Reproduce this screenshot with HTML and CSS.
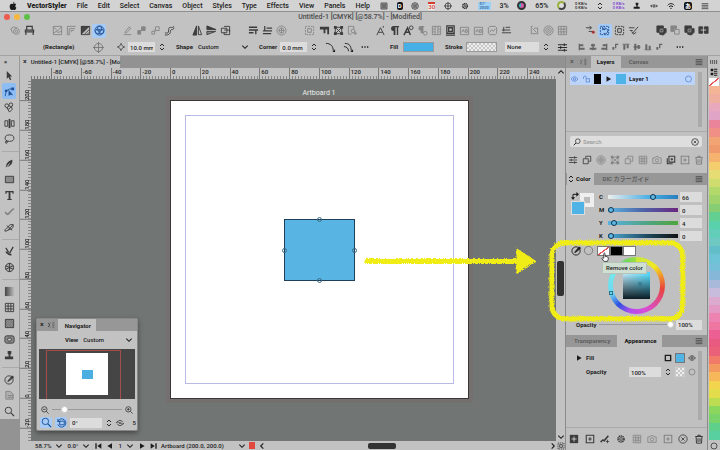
FILE: index.html
```html
<!DOCTYPE html>
<html lang="en">
<head>
  <meta charset="UTF-8">
  <meta name="viewport" content="width=device-width, initial-scale=1.0">
  <title>VectorStyler</title>
  <link rel="stylesheet" href="styles.css">
</head>
<body>
  <svg class="sprite" aria-hidden="true">
    <defs>
      <pattern id="dots" width="2" height="2" patternUnits="userSpaceOnUse"><path d="M0 0h1v1H0zM1 1h1v1H1z" fill="#444" stroke="none"/></pattern>
      <linearGradient id="fade"><stop offset="0" stop-color="#444"/><stop offset="1" stop-color="#bbb"/></linearGradient>
    </defs>
    <symbol id="gear" viewBox="0 0 12 12"><circle cx="6" cy="6" r="3.6" stroke-dasharray="1.6 .7" stroke-width="2"/><circle cx="6" cy="6" r="1.6"/></symbol>
    <symbol id="gearbox" viewBox="0 0 12 12"><path d="M1 4l3-2 3 1 1-1M1 4l1 3 2 2"/><circle cx="7" cy="7" r="3.2"/><circle cx="7" cy="7" r="1.2"/></symbol>
    <symbol id="printer" viewBox="0 0 12 12"><path d="M3 5V1.500h6V5M1.500 5.500h9v2h-9zM2 8v3M10 8v3" stroke-width="1.300"/></symbol>
    <symbol id="curvebox" viewBox="0 0 12 12"><path d="M1.500 1.500h9v9h-9zM1.500 2l4 4h1l4-4M1.500 9l3-2 2 1 4-1"/></symbol>
    <symbol id="steps" viewBox="0 0 12 12"><path d="M1.500 10.500v-9h9M3.500 10v-6h6.500M5.500 8V6h3M1.500 10.500h3"/></symbol>
    <symbol id="hatch" viewBox="0 0 12 12"><path d="M1 1h10L1 11z" fill="#444" stroke="none"/><path d="M1.500 1.500h9v9h-9zM5 10l5-5M8 10l2-2"/></symbol>
    <symbol id="trefoil" viewBox="0 0 12 12"><circle cx="6" cy="4.200" r="2.600"/><circle cx="4.300" cy="7" r="2.600"/><circle cx="7.700" cy="7" r="2.600"/><circle cx="6" cy="6" r="5"/></symbol>
    <symbol id="pencil" viewBox="0 0 12 12"><path d="M2 10.500h8M3 8l5-6 1.500 1.500-5 5.500z"/></symbol>
    <symbol id="link" viewBox="0 0 12 12"><path d="M6 2h4v4H6zM2 6h3v4H2z" fill="currentColor"/><path d="M4 8l4-4"/></symbol>
    <symbol id="linkopen" viewBox="0 0 12 12"><path d="M6 2h4v4H6zM2 7h3v3H2z"/><path d="M4 5l2 2"/></symbol>
    <symbol id="snake" viewBox="0 0 12 12"><path d="M1 8.500c3 1 4 0 4-2s0-4 2-4 2 1 4-1M1 11c5 0 6-2 6-4s1-2 2-2 1 0 2-2"/></symbol>
    <symbol id="fliph" viewBox="0 0 12 12"><path d="M5 1v10H1z" fill="currentColor"/><path d="M7 1v9.500h3.500z"/></symbol>
    <symbol id="flipv" viewBox="0 0 12 12"><path d="M1 5V1l10 4z" fill="currentColor"/><path d="M1 7h9.500L1 10.500z" fill="#888"/></symbol>
    <symbol id="copy" viewBox="0 0 12 12"><path d="M1.500 3.500h6v5h-6zM4.500 1.500h6v6M4.500 8v2.500h6v-5h-6"/></symbol>
    <symbol id="swap" viewBox="0 0 12 12"><path d="M3 9V3.500h6" stroke-width="1.500"/><path d="M0 8h6l-3 4zM8 0v7l4-3.500z" fill="currentColor" stroke="none"/></symbol>
    <symbol id="up" viewBox="0 0 12 12"><path d="M1 2.500h9M1 5.500h10M1 8.500h5M8.500 10V6" stroke-width="1.500"/></symbol>
    <symbol id="down" viewBox="0 0 12 12"><path d="M5 3.500h6M1 6.500h10M1 9.500h9M3 1v5" stroke-width="1.300"/></symbol>
    <symbol id="rings" viewBox="0 0 12 12"><circle cx="6" cy="6" r="5"/><circle cx="6" cy="6" r="2.800"/><path d="M3 6h6M6 3v6"/></symbol>
    <symbol id="marquee" viewBox="0 0 12 12"><path d="M1.500 1.500h9v9h-9z" stroke-dasharray="2 1"/><path d="M4 4h4v4H4z"/></symbol>
    <symbol id="quote" viewBox="0 0 12 12"><path d="M1 2h10v3H1zM5 5h2v4H5zM9 5h2v5H9z" fill="currentColor" stroke="none"/></symbol>
    <symbol id="bounds" viewBox="0 0 12 12"><path d="M2.500 2.500h7v7h-7z"/><path d="M1 1h3v3H1zM8 1h3v3H8zM1 8h3v3H1zM8 8h3v3H8z" fill="currentColor" stroke="none"/><path d="M3 3l6 6M9 3L3 9"/></symbol>
    <symbol id="pageadd" viewBox="0 0 12 12"><path d="M1.500 10V1.500h6v3M1.500 10H5"/><circle cx="6.500" cy="6.500" r="2"/><path d="M9 7v4M7 9h4"/></symbol>
    <symbol id="fontA" viewBox="0 0 12 12"><path d="M2 11L6 3l4 8M3.500 8h5M9 1v2"/></symbol>
    <symbol id="para" viewBox="0 0 12 12"><path d="M5 6.500a2.700 2.700 0 0 1 0-5.500h6v1.500H10V11H8.500V2.500H7V11H5z" fill="currentColor" stroke="none"/></symbol>
    <symbol id="paradim" viewBox="0 0 12 12"><path d="M4 6a2.500 2.500 0 0 1 0-5h4v1H7v7H4z" fill="currentColor" stroke="none"/><circle cx="9" cy="9" r="2"/></symbol>
    <symbol id="fontAo" viewBox="0 0 12 12"><path d="M1 11l4-8 3 8M2.500 8h5" stroke-width="1.600"/><circle cx="9" cy="3" r="2"/></symbol>
    <symbol id="columns" viewBox="0 0 12 12"><path d="M1.500 1.500h9v9h-9zM4.500 2v8M7.500 2v8M2 4.500h2M8 4.500h2M2 7.500h2M8 7.500h2"/></symbol>
    <symbol id="frame" viewBox="0 0 12 12"><path d="M1 11h10M2 1h8v8H2zM4 3h4v4H4z" stroke-width="1.400"/></symbol>
    <symbol id="card" viewBox="0 0 12 12"><path d="M1.500 2.500h9v8h-9zM3 8l1.500-3L6 8M7 5h2v3H7z"/></symbol>
    <symbol id="ring" viewBox="0 0 12 12"><path d="M1.500 3L3 1.500h6L10.500 3v6L9 10.500H3L1.500 9z"/><path d="M3 8l2-3 2 2 2-3"/></symbol>
    <symbol id="wrap" viewBox="0 0 12 12"><path d="M5 2.500h5M1 5.500h9M1 8.500h10M3 2v5"/></symbol>
    <symbol id="corner" viewBox="0 0 12 12"><path d="M2 1.500h2M2.500 2v7M2 9.500h8M9.500 3v6M5.500 3.500h4M4 4l4 4"/></symbol>
    <symbol id="target" viewBox="0 0 12 12"><circle cx="6" cy="6" r="5"/><circle cx="6" cy="6" r="3"/><circle cx="6" cy="6" r="1"/></symbol>
    <symbol id="gridbox" viewBox="0 0 12 12"><path d="M1.500 1.500h9v9h-9zM4.500 2v8M7.500 2v8M2 4.500h8M2 7.500h8"/></symbol>
    <symbol id="nodered" viewBox="0 0 12 12"><path d="M1 3h6M5 1l2 2-2 2M4 7h4"/><circle cx="9" cy="8" r="1.600" fill="#a33" stroke="none"/></symbol>
    <symbol id="snap" viewBox="0 0 12 12"><path d="M1.500 1.500h9v9h-9z" stroke-dasharray="2 1"/><path d="M4 5a3 3 0 1 1 1 4M4 2v3h3"/></symbol>
    <symbol id="brush" viewBox="0 0 12 12"><path d="M1 3h6M2 6h3M5 9l6-7M4 7l2 3 3-2"/></symbol>
    <symbol id="unite" viewBox="0 0 12 12"><path d="M1 1h7v3h3v4l-3 3-4-1V8H1z" fill="currentColor"/><path d="M4.500 4.500h3v3h-3z" stroke="#999"/></symbol>
    <symbol id="minus" viewBox="0 0 12 12"><path d="M1 1h6v3H4v3H1z" fill="currentColor"/><path d="M5 5h5v5H5z"/></symbol>
    <symbol id="divide" viewBox="0 0 12 12"><path d="M1 2h4v7H1zM7 2h4v7H7z" fill="currentColor"/><path d="M3 5.500h6" stroke="#ccc"/></symbol>
    <symbol id="crosshair" viewBox="0 0 12 12"><circle cx="6" cy="6" r="4.500"/><path d="M6 0v12M0 6h12"/></symbol>
    <symbol id="move" viewBox="0 0 12 12"><path d="M1 6h10M6 3v6M3 4L1 6l2 2M9 4l2 2-2 2"/></symbol>
    <symbol id="diamond" viewBox="0 0 12 12"><path d="M6 2l4 4-4 4-4-4z"/><path d="M6 0v3M6 9v3M0 6h3M9 6h3"/></symbol>
    <symbol id="arc" viewBox="0 0 12 12"><path d="M1 1.500c5 0 8 3 8 8"/><path d="M11 8v3H8z" fill="currentColor" stroke="none"/></symbol>
    <symbol id="arcs" viewBox="0 0 12 12"><path d="M2 1.500c5 0 7 3 7 8M1 5c3 0 5 2 5 5"/><path d="M11 8v3H8z" fill="currentColor" stroke="none"/></symbol>
    <symbol id="dots3" viewBox="0 0 12 12"><path d="M1 5h2v2H1zM5 5h2v2H5zM9 5h2v2H9z" fill="currentColor" stroke="none"/></symbol>
    <symbol id="sliders" viewBox="0 0 12 12"><path d="M1 3h10M1 6h10M1 9h10M8 1.500v3M4 4.500v3M8 7.500v3"/></symbol>
    <symbol id="alignl" viewBox="0 0 12 12"><path d="M1 1h2v10H1zM3 2h5v3H3zM3 7h7v3H3z" fill="currentColor" stroke="none"/></symbol>
    <symbol id="alignc" viewBox="0 0 12 12"><path d="M5 1h2v10H5zM3 2h6v3H3zM1 7h10v3H1z" fill="currentColor" stroke="none"/></symbol>
    <symbol id="alignr" viewBox="0 0 12 12"><path d="M9 1h2v10H9zM4 2h5v3H4zM2 7h7v3H2z" fill="currentColor" stroke="none"/></symbol>
    <symbol id="aligns" viewBox="0 0 12 12"><path d="M6 1h5v2H8v5H6zM2 6h3v4H2z" fill="currentColor" stroke="none"/></symbol>
    <symbol id="alignt" viewBox="0 0 12 12"><path d="M1 1h10v1.500H1zM2 3h3v7H2zM7 3h3v5H7z" fill="currentColor" stroke="none"/></symbol>
    <symbol id="alignm" viewBox="0 0 12 12"><path d="M1 5h10v2H1zM2 1h3v10H2zM7 3h3v6H7z" fill="currentColor" stroke="none"/></symbol>
    <symbol id="alignb" viewBox="0 0 12 12"><path d="M1 9.500h10V11H1zM2 2h3v7H2zM7 4h3v5H7z" fill="currentColor" stroke="none"/></symbol>
    <symbol id="arrow" viewBox="0 0 12 12"><path d="M3 1l6 6H6.500L8 10.500l-1.500.5L5 8 3 9.500z" fill="currentColor" stroke="none"/></symbol>
    <symbol id="node" viewBox="0 0 12 12"><path d="M1.500 11c0-5 2-8 8-8"/><path d="M5 4l5 6-3-.5L5 11zM8 1.500h3v3H8zM1 4h2.500v2.500H1z" fill="currentColor" stroke="none"/></symbol>
    <symbol id="select" viewBox="0 0 12 12"><circle cx="3" cy="4" r="2"/><circle cx="7.500" cy="3" r="2"/><path d="M3 6l2 2 3-3 1 3-3 3z"/></symbol>
    <symbol id="mirror" viewBox="0 0 12 12"><path d="M1 3h3v6H1zM8 3h3v6H8z"/><path d="M5 1h2v10H5z" fill="currentColor" stroke="none"/></symbol>
    <symbol id="lasso" viewBox="0 0 12 12"><ellipse cx="6" cy="4.500" rx="4.800" ry="3.500"/><path d="M3 7c-2 1 0 3 1 2s-1-2-2-1 0 2 1 3"/></symbol>
    <symbol id="pen" viewBox="0 0 12 12"><path d="M2 11c0-5 3-8 7-9 1 4-2 7-6 8z" fill="currentColor" stroke="none"/><path d="M2 11l4-5" stroke="#ccc"/></symbol>
    <symbol id="shape" viewBox="0 0 12 12"><path d="M1.500 2.500h9v7h-9z" fill="#8b8b8b"/></symbol>
    <symbol id="type" viewBox="0 0 12 12"><path d="M1.500 1h9v3H9.300L9 2.500H7v7l1.500.5v1h-5v-1L5 9.500v-7H3L2.700 4H1.500z" fill="currentColor" stroke="none"/></symbol>
    <symbol id="stroke" viewBox="0 0 12 12"><path d="M1 7c1 0 2 2 3 2s4-5 7-6" stroke-width="2"/></symbol>
    <symbol id="blob" viewBox="0 0 12 12"><path d="M1 10c0-4 4-3 4-5s4-3 5-2-1 5-3 5-3 2-6 2zM3 4l6 5M4 9l6-6"/></symbol>
    <symbol id="knife" viewBox="0 0 12 12"><path d="M2 2l3 5M10 1L6 8" stroke-width="1.400"/><path d="M2 7c2-1 3 4 6 2" stroke-width="1.800"/></symbol>
    <symbol id="mesh" viewBox="0 0 12 12"><circle cx="6" cy="6" r="4.500" fill="#aaa"/><path d="M2 4l8 4M2 8l8-4M6 1v10"/></symbol>
    <symbol id="gradient" viewBox="0 0 12 12"><path d="M1 1h10v10H1z" fill="url(#fade)" stroke="none"/></symbol>
    <symbol id="pattern" viewBox="0 0 12 12"><path d="M1.500 1.500h9v9h-9z" fill="url(#dots)"/></symbol>
    <symbol id="contour" viewBox="0 0 12 12"><rect x="1" y="2" width="10" height="8" rx="2" fill="#888"/><rect x="4" y="4.500" width="4" height="3" rx="1" fill="#ccc"/></symbol>
    <symbol id="person" viewBox="0 0 12 12"><path d="M4 1h4v3L7 5v2h3v3H1V7h4V5L4 4z" fill="currentColor" stroke="none"/></symbol>
    <symbol id="dropper" viewBox="0 0 12 12"><circle cx="5.500" cy="6.500" r="4.500"/><path d="M4 8l5-6 1.500 1.500L5 8z" fill="currentColor"/></symbol>
    <symbol id="artboard" viewBox="0 0 12 12"><path d="M2 1.500h5l3 3V10H2z" fill="#999"/><path d="M4 6h6M4 8h6"/></symbol>
    <symbol id="zoom" viewBox="0 0 12 12"><circle cx="4.800" cy="4.800" r="3.500"/><path d="M7.500 7.500L11 11" stroke-width="1.400"/></symbol>
    <symbol id="zoomin" viewBox="0 0 12 12"><circle cx="5" cy="5" r="4"/><path d="M8 8l3.500 3.500M3 5h4M5 3v4"/></symbol>
    <symbol id="zoomout" viewBox="0 0 12 12"><circle cx="5" cy="5" r="4"/><path d="M8 8l3.500 3.500M3 5h4"/></symbol>
    <symbol id="rotate" viewBox="0 0 12 12"><path d="M2 2v3h3M2 5a4.500 4.500 0 1 1 0 3"/><path d="M4 4.500h5v4H4z"/></symbol>
    <symbol id="sync" viewBox="0 0 12 12"><path d="M2 5a4.200 4.200 0 0 1 8 0M10 7a4.200 4.200 0 0 1-8 0M0 6l2-2 2 2M8 6l2 2 2-2"/><circle cx="6" cy="6" r="1"/></symbol>
    <symbol id="eye" viewBox="0 0 12 12"><path d="M1 6c3-4.500 7-4.500 10 0-3 4.500-7 4.500-10 0z"/><circle cx="6" cy="6" r="1.700"/></symbol>
    <symbol id="lock" viewBox="0 0 12 12"><path d="M5.500 5.500h5v5h-5zM1.500 6V3.500a2 2 0 0 1 4 0v2"/></symbol>
    <symbol id="burger" viewBox="0 0 12 12"><path d="M1 2.500h10M1 5h10M1 7.500h10M1 10h10"/></symbol>
    <symbol id="layers" viewBox="0 0 12 12"><path d="M1.500 4.500h6v6h-6zM4.500 4V1.500h6v6H8"/></symbol>
    <symbol id="layeradd" viewBox="0 0 12 12"><path d="M1.500 4v6.500H8M3.500 1.500h7v7h-7zM7 3.500v3M5.500 5h3" stroke-width="1.300"/></symbol>
    <symbol id="add" viewBox="0 0 12 12"><path d="M1.500 1.500h9v9h-9zM6 4v4M4 6h4" stroke-width="1.300"/></symbol>
    <symbol id="addfill" viewBox="0 0 12 12"><path d="M1 1h10v10H1z" fill="currentColor" stroke="none"/><path d="M6 3v6M3 6h6" stroke="#ddd"/></symbol>
    <symbol id="trash" viewBox="0 0 12 12"><path d="M1.500 3h9M4.500 3V1.500h3V3M2.500 3.500l.5 7.500h6l.5-7.500M4.800 5v4.500M7.200 5v4.500" stroke-width="1.200"/></symbol>
    <symbol id="camera" viewBox="0 0 12 12"><path d="M1 3.500h2.500L4.500 2h3l1 1.500H11V10H1z"/><circle cx="6" cy="6.500" r="2"/></symbol>
    <symbol id="clear" viewBox="0 0 12 12"><circle cx="6" cy="6" r="5"/><path d="M4 4l4 4M8 4L4 8"/></symbol>
    <symbol id="circle" viewBox="0 0 12 12"><circle cx="6" cy="6" r="4.500"/></symbol>
    <symbol id="brushadd" viewBox="0 0 12 12"><path d="M1 10c1-3 3-3 4-2l5-6" stroke-width="2"/><path d="M9 7v4M7 9h4"/></symbol>
    <symbol id="square" viewBox="0 0 12 12"><path d="M2 2h8v8H2z" stroke-width="2"/></symbol>
    <symbol id="caret" viewBox="0 0 12 12"><path d="M2 4l4 4 4-4" stroke-width="1.600"/></symbol>
    <symbol id="updown" viewBox="0 0 12 12"><path d="M3 4.500l3-3 3 3M3 7.500l3 3 3-3" stroke-width="1.400"/></symbol>
    <symbol id="play" viewBox="0 0 12 12"><path d="M3 2l7 4-7 4z" fill="currentColor" stroke="none"/></symbol>
    <symbol id="playend" viewBox="0 0 12 12"><path d="M1 2l6 4-6 4zM8 2h2v8H8z" fill="currentColor" stroke="none"/></symbol>
    <symbol id="apple" viewBox="0 0 12 12"><path d="M8 0c0 1.500-1 2.500-2.200 2.500C5.700 1.300 7 .2 8 0zM6 3c.8 0 1.300-.6 2.500-.6 1 0 1.800.5 2.300 1.300-2 1.200-1.700 4 .3 4.800C10.500 10.200 9.600 12 8.300 12 7.400 12 7 11.500 6.100 11.500S4.800 12 4 12C2.400 12 1 9.200 1 6.700 1 4 2.500 2.500 4 2.500c.9 0 1.400.5 2 .5z" fill="currentColor" stroke="none"/></symbol>
    <symbol id="wifi" viewBox="0 0 12 12"><path d="M1 5c3-3.500 7-3.500 10 0M3 7.300c2-2 4-2 6 0M5 9.500h2" stroke-width="1.500"/></symbol>
    <symbol id="grip" viewBox="0 0 12 12"><path d="M2 3l2 3-2 3M4 3h1M4 9h1"/><path d="M8 1h3v10H8z" fill="#777" stroke="none"/></symbol>
    <symbol id="ticks" viewBox="0 0 12 12"><path d="M1 3v6M4 3v6M7 3v6M10 3v6"/></symbol>
    <symbol id="list" viewBox="0 0 12 12"><path d="M1 1h4v4H1zM1 7h4v4H1zM6 1h5v1.500H6zM6 4h5v1.500H6zM6 7h5v1.500H6zM6 10h5v1.500H6z" fill="currentColor" stroke="none"/></symbol>
  </svg>

  <nav class="menubar">
    <svg class="icon-s"><use href="#apple"/></svg>
    <a href="#" class="app">VectorStyler</a>
    <a href="#">File</a><a href="#">Edit</a><a href="#">Select</a><a href="#">Canvas</a><a href="#">Object</a><a href="#">Styles</a><a href="#">Type</a><a href="#">Effects</a><a href="#">View</a><a href="#">Panels</a><a href="#">Help</a>
    <div class="status">
      <svg class="icon-s"><use href="#gridbox"/></svg>
      <span class="badge">D</span>
      <svg class="icon-s"><use href="#target"/></svg>
      <span class="date">30</span>
      <svg class="icon-s"><use href="#crosshair"/></svg>
      <svg class="icon-s"><use href="#gear"/></svg>
      <span class="fan">57°<br>2000</span>
      <span>3%</span>
      <i class="disk"></i>
      <span>65%</span>
      <i class="disk lime"></i>
      <span class="tiny">0 KB/s<br>0 KB/s</span>
      <svg class="icon-s"><use href="#updown"/></svg>
      <span class="tiny violet">0 KB/s<br>0 KB/s</span>
      <svg class="icon-s"><use href="#person"/></svg>
      <svg class="icon-s"><use href="#move"/></svg>
      <svg class="icon-s"><use href="#wifi"/></svg>
      <span class="badge">あ</span>
      <svg class="icon-s"><use href="#burger"/></svg>
    </div>
  </nav>

  <header class="titlebar">
    <span class="lights"><i class="red"></i><i class="amber"></i><i class="green"></i></span>
    <h1>Untitled-1 [CMYK] [@58.7%] - [Modified]</h1>
  </header>

  <div class="toolbar" id="toolbar"></div>

  <div class="options">
    <div class="cell name">(Rectangle)</div>
    <div class="cell dim"><svg class="icon"><use href="#crosshair"/></svg></div>
    <div class="cell"><svg class="icon-s"><use href="#diamond"/></svg><input type="text" value="10.0 mm" aria-label="Size"><svg class="icon-s"><use href="#updown"/></svg></div>
    <div class="cell"><label for="shape">Shape</label><select id="shape"><option>Custom</option></select><svg class="icon-s"><use href="#caret"/></svg></div>
    <div class="cell"><label for="corner-size">Corner</label><input type="text" id="corner-size" value="0.0 mm"><svg class="icon-s"><use href="#updown"/></svg><svg class="icon gap"><use href="#arc"/></svg><svg class="icon gap"><use href="#arcs"/></svg><svg class="icon-s gap"><use href="#dots3"/></svg></div>
    <div class="cell"><label for="fill">Fill</label><button id="fill" class="paint fill" aria-label="Fill"></button></div>
    <div class="cell"><label for="stroke-paint">Stroke</label><button id="stroke-paint" class="paint checker" aria-label="Stroke"></button></div>
    <div class="cell"><select class="light" aria-label="Stroke profile"><option>None</option></select><svg class="icon-s"><use href="#updown"/></svg><svg class="icon gap"><use href="#sliders"/></svg></div>
    <div class="cell align">
      <svg class="icon-s"><use href="#alignl"/></svg><svg class="icon-s"><use href="#alignc"/></svg><svg class="icon-s"><use href="#alignr"/></svg><svg class="icon-s"><use href="#aligns"/></svg>
      <svg class="icon-s"><use href="#alignt"/></svg><svg class="icon-s"><use href="#alignm"/></svg><svg class="icon-s"><use href="#alignb"/></svg><svg class="icon-s"><use href="#aligns"/></svg>
    </div>
    <div class="cell"><svg class="icon-s"><use href="#dots3"/></svg></div>
  </div>

  <main class="workspace">
    <aside class="tools">
      <button class="close" aria-label="Close tools">×</button>
      <div id="tools"></div>
    </aside>

    <section class="document">
      <div class="tabs"><div class="tab"><span class="x">×</span>Untitled-1 [CMYK] [@58.7%] - [Mo</div></div>
      <div class="ruler-x"><span class="origin"></span><div class="marks" id="ruler-x"></div><svg class="icon-s flip"><use href="#caret"/></svg></div>
      <div class="view">
        <div class="ruler-y" id="ruler-y"></div>
        <div class="canvas">
          <div class="artboard-label">Artboard 1</div>
          <div class="artboard">
            <div class="margins"></div>
            <div class="rect"><i class="n"></i><i class="e"></i><i class="s"></i><i class="w"></i></div>
          </div>
          <div class="navigator">
            <div class="nav-tabs"><span class="x">×</span><svg class="icon-s"><use href="#grip"/></svg><span class="nav-title">Navigator</span></div>
            <div class="nav-view"><label for="view">View</label><select id="view"><option>Custom</option></select><svg class="icon-s"><use href="#caret"/></svg></div>
            <div class="preview"><div class="viewport"></div><div class="page"><i></i></div></div>
            <div class="nav-row"><svg class="icon-s"><use href="#zoomout"/></svg><input type="range" class="plain" value="15" aria-label="Zoom"><svg class="icon-s"><use href="#zoomin"/></svg></div>
            <div class="nav-row last">
              <button class="tool on" aria-label="Zoom tool"><svg class="icon"><use href="#zoom"/></svg></button>
              <button class="tool on" aria-label="Rotate view"><svg class="icon"><use href="#rotate"/></svg></button>
              <input type="text" value="0°" aria-label="Angle"><svg class="icon-s"><use href="#updown"/></svg><svg class="icon-s"><use href="#sync"/></svg><span class="count">5</span>
            </div>
          </div>
        </div>
        <div class="scroll-y"><i></i><svg class="icon-s"><use href="#caret"/></svg></div>
      </div>
      <footer class="statusbar">
        <div class="pages">
          <span>58.7%</span><svg class="icon-s"><use href="#caret"/></svg>
          <span>0.0°</span><svg class="icon-s"><use href="#caret"/></svg>
          <svg class="icon-s back"><use href="#playend"/></svg><svg class="icon-s back"><use href="#play"/></svg>
          <span>1</span><svg class="icon-s"><use href="#caret"/></svg>
          <svg class="icon-s"><use href="#play"/></svg><svg class="icon-s"><use href="#playend"/></svg>
        </div>
        <span class="where">Artboard (200.0, 200.0)</span>
        <svg class="icon-s"><use href="#caret"/></svg>
        <i class="stop"></i>
        <svg class="icon-s left"><use href="#caret"/></svg>
        <div class="scroll-x"><i></i></div>
        <svg class="icon-s right"><use href="#caret"/></svg>
        <svg class="icon-s"><use href="#marquee"/></svg>
      </footer>
    </section>

    <aside class="panels">
      <div class="panel-tabs"><span class="x">×</span><svg class="icon-s"><use href="#grip"/></svg><button class="active first">Layers</button><button>Canvas</button><svg class="icon-s menu"><use href="#burger"/></svg></div>
      <div class="layers">
        <div class="layer-list">
          <div class="layer"><svg class="icon-s blue"><use href="#eye"/></svg><svg class="icon-s blue"><use href="#lock"/></svg><i class="black"></i><svg class="icon-s"><use href="#play"/></svg><i class="thumb"></i><span>Layer 1</span><svg class="icon-s blue end"><use href="#circle"/></svg></div>
        </div>
        <i class="bar"></i>
      </div>
      <div class="search"><svg class="icon-s mag"><use href="#zoom"/></svg><input type="text" placeholder="Search" aria-label="Search layers"><svg class="icon-s"><use href="#clear"/></svg></div>
      <div class="icon-row" id="layer-icons"></div>

      <div class="panel-tabs"><button class="active color-tab"><svg class="icon-s"><use href="#updown"/></svg>Color</button><button class="jp">DIC カラーガイド</button><svg class="icon-s menu"><use href="#burger"/></svg></div>
      <div class="color">
        <div class="mix">
          <div class="paints"><svg class="icon-s"><use href="#swap"/></svg><i class="under"></i><i class="over"></i></div>
          <div class="channels">
            <label for="c">C</label><input type="range" id="c" class="c" value="66"><input type="text" value="66" aria-label="C value">
            <label for="m">M</label><input type="range" id="m" class="m" value="0"><input type="text" value="0" aria-label="M value">
            <label for="y">Y</label><input type="range" id="y" class="y" value="4"><input type="text" value="4" aria-label="Y value">
            <label for="k">K</label><input type="range" id="k" class="k" value="0"><input type="text" value="0" aria-label="K value">
          </div>
        </div>
        <div class="quick"><svg class="icon"><use href="#dropper"/></svg><svg class="icon dim"><use href="#circle"/></svg>
          <div class="chips"><button class="none" aria-label="Remove color"></button><button class="k" aria-label="Black"></button><button aria-label="White"></button>
            <svg class="hand" viewBox="0 0 10 12"><path d="M3.500 7V1.500q1-1 1.500 0V5l3.500 1q1 .5.500 3l-1 2.500H4L1 8q.5-1.500 2.500-.5z" fill="#fff" stroke="#222"/></svg>
            <span class="tooltip">Remove color</span></div>
        </div>
        <div class="wheel"><div class="sv"><i></i></div><i class="hue"></i></div>
        <div class="opacity"><label for="op">Opacity</label><input type="range" id="op" class="plain" value="100"><input type="text" value="100%" aria-label="Opacity value"></div>
      </div>

      <div class="panel-tabs lower"><button>Transparency</button><button class="active">Appearance</button><svg class="icon-s menu"><use href="#burger"/></svg></div>
      <div class="appearance">
        <div class="rows">
          <div class="row"><svg class="icon-s"><use href="#play"/></svg><span class="label">Fill</span><svg class="icon-s"><use href="#square"/></svg><i class="sw"></i><svg class="icon-s"><use href="#eye"/></svg></div>
          <div class="row"><label class="label indent" for="op2">Opacity</label><input type="text" id="op2" value="100%"><svg class="icon-s"><use href="#updown"/></svg><i class="sw checker"></i><svg class="icon-s dim"><use href="#circle"/></svg></div>
        </div>
        <i class="bar"></i>
      </div>
      <div class="icon-row bottom" id="appearance-icons"></div>
    </aside>

    <aside class="swatches">
      <svg class="icon-s"><use href="#ticks"/></svg>
      <svg class="icon-s"><use href="#list"/></svg>
      <i class="no-color"></i>
      <div class="strip" id="strip"></div>
      <svg class="icon-s"><use href="#circle"/></svg>
    </aside>
  </main>

  <svg class="notes" viewBox="0 0 720 450" aria-hidden="true">
    <filter id="chalk"><feTurbulence baseFrequency=".5" numOctaves="2" seed="3"/><feDisplacementMap in="SourceGraphic" scale="2"/></filter>
    <g filter="url(#chalk)">
      <path d="M366 260.500H518" fill="none" stroke="#f0ec18" stroke-width="5" stroke-linecap="round"/>
      <path d="M516 248L535 260.500l-19 12z" fill="#f0ec18" stroke="#f0ec18" stroke-width="1"/>
      <rect x="551" y="242" width="131" height="76" rx="13" fill="none" stroke="#f0ec18" stroke-width="5"/>
    </g>
  </svg>

  <script>
    const icon = (name, cls = 'icon') => `<svg class="${cls}"><use href="#${name}"/></svg>`;
    const button = (name) => {
      const id = name.replace(/[*~]/, '');
      const state = name.endsWith('*') ? ' on' : name.endsWith('~') ? ' dim' : '';
      return `<button class="tool${state}" aria-label="${id}">${icon(id)}</button>`;
    };

    // * = switched on, ~ = disabled
    const toolbar = [
      'gearbox~ printer', 'curvebox~ steps~ hatch trefoil*', 'pencil~ link~ linkopen~ snake',
      'fliph flipv copy', 'up down rings~', 'marquee~ quote bounds pageadd~',
      'fontA para fontAo paradim~ columns~ frame card~ card~ ring~ wrap', 'corner~ target~ gridbox~',
      'nodered snap* marquee brush', 'unite minus~ unite divide'
    ];
    document.getElementById('toolbar').innerHTML =
      toolbar.map(g => g.split(' ').map(button).join('')).join('<span class="tool"></span>');

    const tools = ['arrow node* select mirror lasso', 'pen shape type stroke~ blob', 'knife mesh',
      'gradient gridbox pattern contour person', 'dropper artboard~ zoom'];
    document.getElementById('tools').innerHTML =
      tools.map(g => g.split(' ').map(button).join('')).join('<hr>');

    const iconRow = (id, names) => {
      document.getElementById(id).innerHTML = names.split(' ').map(button).join('');
    };
    iconRow('layer-icons', 'sliders layers rings~ bounds~ layers~ gridbox~ camera~ layeradd add~ trash~');
    iconRow('appearance-icons', 'addfill add brushadd gear gridbox~ camera~ add~ clear trash');

    // ruler labels, one cell per 20 mm
    for (let v = -80; v <= 240; v += 20)
      document.getElementById('ruler-x').innerHTML += `<span>${v}</span>`;
    for (let v = 200; v >= -40; v -= 20)
      document.getElementById('ruler-y').innerHTML += `<span>${v < -20 ? '' : v}</span>`;

    const colors = ['#f3b596', '#efaf9e', '#e8a8bd', '#dfa4c6', '#e9849b', '#ef8f86', '#f3a474', '#ef9a6c', '#f5b36f',
      '#f4cd6c', '#e6dc74', '#cfdd6e', '#b3d96a', '#a0d36c', '#86cd74', '#63cf91', '#59d1aa', '#62cdb9', '#6fc9c2',
      '#62bfc9', '#6cc3d6', '#76bfd9', '#86b7d8', '#a9b9da', '#c8bcdc', '#dca9cf', '#e29ac4', '#ec83b0', '#ee76a0',
      '#ec5f92', '#e85a80', '#ea6078', '#f17b68', '#f39a60', '#f6b85a', '#f3d44e', '#e4dd4b', '#bcdc52', '#8bd65c',
      '#79d26a', '#5fd08c', '#58d0a0'];
    document.getElementById('strip').innerHTML =
      colors.map(c => `<i style="background:${c}"></i>`).join('');
  </script>
</body>
</html>
```

FILE: styles.css
```css
* {
  box-sizing: border-box;
}

body {
  margin: 0;
  height: 100vh;
  display: flex;
  flex-direction: column;
  position: relative;
  overflow: hidden;
  background: #c2c2c2;
  color: #1c1c1c;
  font: 500 6px/8px Roboto, "Noto Sans CJK JP", sans-serif;
}

button, input, select {
  font: inherit;
  color: inherit;
  margin: 0;
  padding: 0;
  border: 0;
  background: none;
  min-width: 0;
  appearance: none;
}

input[type="text"], .light {
  background: #dcdcdc;
  height: 10px;
  padding: 0 2px;
}

svg {
  fill: none;
  stroke: currentColor;
  flex: none;
  display: block;
}

.sprite {
  position: absolute;
  width: 0;
  height: 0;
}

.icon {
  width: 11px;
  height: 11px;
}

.icon-s {
  width: 8px;
  height: 8px;
}

.dim {
  opacity: 0.45;
}

.x {
  font-size: 7px;
}

/* menu bar */
.menubar {
  display: flex;
  align-items: center;
  gap: 10px;
  height: 12px;
  padding: 0 11px 0 9px;
  background: #d3d3d3;
  border-bottom: 1px solid #8f8f8f;
  font-size: 7px;
  white-space: nowrap;
}

.menubar a {
  color: inherit;
  text-decoration: none;
}

.menubar .app {
  font-weight: 900;
}

.status {
  flex: 1;
  display: flex;
  align-items: center;
  justify-content: space-between;
}

.badge {
  background: #151515;
  color: #fff;
  border-radius: 2px;
  padding: 0 1px;
  font-size: 6px;
  font-weight: 700;
}

.date {
  color: #d33b2c;
  border-top: 2px solid #d33b2c;
  font-size: 6px;
  line-height: 6px;
  background: #eee;
}

.tiny, .fan {
  font-size: 4px;
  line-height: 4px;
}

.fan {
  color: #2a5f94;
  background: #9fd0f5;
  padding: 0 2px;
}

.violet {
  color: #7a35d8;
}

.disk {
  width: 9px;
  height: 9px;
  border-radius: 50%;
  background: conic-gradient(#d65aa5 0 60%, #36b8c6 60%);
  border: 2px solid #333;
}

.lime {
  background: #ddd;
  border-color: #9bb23c #444 #444 #9bb23c;
}

/* title */
.titlebar {
  display: grid;
  grid-template-columns: 1fr auto 1fr;
  align-items: center;
  height: 10px;
  padding: 0 4px;
}

.titlebar h1 {
  margin: 0;
  font-size: 7px;
  font-weight: 500;
  color: #4c4c4c;
}

.lights {
  display: flex;
  gap: 4px;
}

.lights i {
  width: 6px;
  height: 6px;
  border-radius: 50%;
}

.red { background: #ee5b50; }
.amber { background: #f5b83c; }
.green { background: #5dc046; }

.toolbar {
  display: flex;
  justify-content: space-between;
  align-items: center;
  height: 17px;
  padding: 0 9px 0 8px;
}

.tool {
  width: 14px;
  height: 14px;
  display: flex;
  align-items: center;
  justify-content: center;
  color: #3c3c3c;
}

.tool.on {
  background: #a5cbf6;
  color: #1d4f96;
  border-radius: 2px;
}

/* options of the selected object */
.options {
  display: grid;
  grid-template-columns: 50fr 24fr 59fr 83fr 131fr 55fr 60fr 73fr 98fr 44fr;
  align-items: center;
  height: 17px;
  padding-left: 43px;
  border-bottom: 1px solid #a2a2a2;
}

.cell {
  display: flex;
  align-items: center;
  gap: 3px;
  min-width: 0;
  white-space: nowrap;
}

.cell label, .name {
  font-weight: 700;
}

.cell input {
  width: 27px;
}

.cell select {
  width: 42px;
  padding-left: 2px;
}

.cell .light {
  width: 34px;
}

.gap {
  margin-left: 4px;
}

.paint {
  width: 31px;
  height: 10px;
  border: 1px solid #999;
}

#fill {
  margin-left: 2px;
}

.fill {
  background: #45b0e6;
}

.checker {
  background: repeating-conic-gradient(#eee 0 25%, #c6c6c6 0 50%) 0 0 / 4px 4px;
}

.align svg {
  color: #666;
}

/* workspace */
.workspace {
  flex: 1;
  min-height: 0;
  display: grid;
  grid-template-columns: 20px minmax(0, 1fr) 143px 12px;
  background: #939393;
}

.tools {
  align-self: start;
  background: #c2c2c2;
  border-right: 1px solid #999;
  padding-left: 2px;
}

.close {
  display: block;
  height: 11px;
  padding-left: 2px;
}

.tools .tool {
  height: 16px;
}

.tools .tool.on {
  background: #8dbdf2;
}

.tools hr {
  margin: 4px 0 3px;
  border: 0;
  border-top: 1px solid #aaa;
}

.document {
  min-width: 0;
  display: flex;
  flex-direction: column;
}

.tabs {
  display: flex;
  height: 12px;
  background: #929292;
}

.tab {
  padding: 0 0 0 3px;
  background: #c2c2c2;
  line-height: 11px;
  white-space: nowrap;
}

.tab .x {
  margin-right: 4px;
}

.ruler-x {
  display: flex;
  height: 11px;
  background: #c2c2c2;
  overflow: hidden;
}

.origin {
  width: 31px;
  background: repeating-linear-gradient(90deg, #777 0 1px, transparent 1px 3px) 11px 8px / 20px 3px no-repeat;
}

.marks {
  flex: 1;
  display: flex;
}

.marks span {
  flex: 1;
  min-width: 0;
  padding-left: 1px;
  border-left: 1px solid #777;
  line-height: 7px;
  background: repeating-linear-gradient(90deg, #888 0 1px, transparent 1px 3px) 2px 8px / 100% 3px no-repeat;
}

.view {
  flex: 1;
  min-height: 0;
  display: flex;
}

.ruler-y {
  width: 11px;
  display: flex;
  flex-direction: column;
  background: #c2c2c2;
}

.ruler-y span {
  flex: 30 0 0;
  min-height: 0;
  padding: 0 3px 0 2px;
  writing-mode: vertical-rl;
  transform: rotate(180deg);
  border-top: 1px solid #777;
  line-height: 7px;
  background: repeating-linear-gradient(#888 0 1px, transparent 1px 3px) 0 0 / 3px 100% no-repeat;
}

.ruler-y span:first-child {
  flex-grow: 22;
}

.ruler-y span:last-child {
  flex-grow: 13;
  border: 0;
}

.canvas {
  flex: 1;
  position: relative;
  overflow: hidden;
  background: #717573;
}

.artboard-label {
  position: absolute;
  left: 139px;
  top: 10px;
  width: 298px;
  text-align: center;
  font-size: 7px;
  font-weight: 400;
  color: #eee;
}

.artboard {
  position: absolute;
  left: 139px;
  top: 21px;
  width: 299px;
  height: 299px;
  background: #fff;
  border: 1px solid #3b3538;
  outline: 4px solid #74706f;
}

.margins {
  position: absolute;
  inset: 14px;
  border: 1px solid #b9b9e6;
}

.rect {
  position: absolute;
  left: 113px;
  top: 118px;
  width: 71px;
  height: 62px;
  background: #58b4e3;
  border: 1px solid #1f4058;
}

.rect i {
  position: absolute;
  width: 5px;
  height: 5px;
  border: 1px solid #3c6c86;
  border-radius: 50%;
}

.rect .n { left: 32px; top: -3px; }
.rect .s { left: 32px; bottom: -3px; }
.rect .w { left: -3px; top: 28px; }
.rect .e { right: -3px; top: 28px; }

.navigator {
  position: absolute;
  left: 5px;
  bottom: 10px;
  width: 102px;
  background: #c2c2c2;
  border: 1px solid #888;
  border-radius: 2px;
  box-shadow: 0 2px 5px rgba(0, 0, 0, 0.4);
  overflow: hidden;
}

.nav-tabs {
  display: flex;
  align-items: center;
  gap: 3px;
  height: 12px;
  padding-left: 3px;
  background: #979797;
}

.nav-title {
  align-self: stretch;
  padding: 0 5px 0 7px;
  line-height: 13px;
  font-weight: 700;
  background: #c2c2c2;
}

.nav-view {
  display: flex;
  align-items: center;
  gap: 5px;
  height: 18px;
  padding: 0 4px 0 28px;
}

.nav-view label {
  font-weight: 700;
}

.nav-view select {
  flex: 1;
}

.preview {
  position: relative;
  display: flex;
  justify-content: center;
  height: 50px;
  margin: 0 2px;
  padding: 4px 0;
  background: #454545;
}

.viewport {
  position: absolute;
  inset: 1px 14px 0 7px;
  border: 1px solid #a54c4c;
  border-bottom: 0;
}

.page {
  position: relative;
  width: 42px;
  background: #fff;
  display: grid;
  place-items: center;
}

.page i {
  width: 11px;
  height: 9px;
  background: #4aaee0;
}

.nav-row {
  display: flex;
  align-items: center;
  gap: 3px;
  height: 13px;
  padding: 0 4px;
  margin-top: 4px;
}

.nav-row.last {
  margin-top: 0;
  height: 14px;
  padding: 0 1px 1px 3px;
}

.nav-row .tool {
  width: 12px;
  height: 11px;
}

.nav-row input[type="text"] {
  width: 32px;
}

.nav-row .plain {
  flex: 1;
}

.count {
  margin-left: auto;
}

.scroll-y {
  width: 9px;
  display: flex;
  flex-direction: column;
  align-items: center;
  background: #c2c2c2;
}

/* free track above and below the thumb */
.scroll-y::before, .scroll-y::after {
  content: "";
  flex: 183;
}

.scroll-y::after {
  flex: 137;
  order: 1;
}

.scroll-y i {
  width: 7px;
  height: 35px;
  border-radius: 2px;
  background: #333;
}

.scroll-y svg {
  order: 2;
}

.statusbar {
  display: flex;
  align-items: center;
  height: 9px;
  padding-left: 15px;
  background: #c2c2c2;
  line-height: 8px;
  white-space: nowrap;
}

.pages {
  display: flex;
  justify-content: space-between;
  align-items: center;
  width: 123px;
}

.where {
  width: 77px;
  margin-left: 3px;
}

.back, .flip {
  transform: rotate(180deg);
}

.left { transform: rotate(90deg); }
.right { transform: rotate(-90deg); }

.stop {
  width: 6px;
  height: 7px;
  margin: 0 3px;
  background: #e2473d;
}

.scroll-x {
  flex: 1;
  display: flex;
}

.scroll-x i {
  width: 28px;
  height: 6px;
  margin-left: 36%;
  border-radius: 2px;
  background: #333;
}

/* panels */
.panels {
  min-width: 0;
  display: flex;
  flex-direction: column;
  background: #c0c0c0;
  border-left: 1px solid #8a8a8a;
  border-right: 1px solid #8a8a8a;
}

.panel-tabs {
  display: flex;
  align-items: center;
  gap: 2px;
  height: 12px;
  padding: 0 4px 0 1px;
  background: #979797;
  color: #555;
}

.panel-tabs .x {
  margin: 0 3px;
}

.panel-tabs button {
  align-self: stretch;
  padding: 0 6px;
}

.panel-tabs .active {
  background: #c0c0c0;
  color: #111;
  font-weight: 700;
}

.panel-tabs .first {
  margin-left: 2px;
}

.panel-tabs .menu {
  margin-left: auto;
  color: #333;
}

.panel-tabs .color-tab {
  display: flex;
  align-items: center;
  gap: 1px;
  padding: 0 4px 0 0;
}

.layers {
  display: flex;
  justify-content: space-between;
  gap: 3px;
  height: 64px;
  padding: 4px 5px 4px 4px;
  border-bottom: 1px solid #aaa;
}

.layer-list {
  flex: 1;
}

.bar {
  width: 4px;
  background: #aaa;
}

.layer {
  display: flex;
  align-items: center;
  gap: 3px;
  height: 13px;
  padding: 0 2px 0 0;
  font-weight: 700;
  background: #bcd4fa;
}

.layer .icon-s {
  width: 9px;
}

.blue {
  color: #4b78c9;
}

.black {
  width: 7px;
  height: 10px;
  background: #000;
}

.thumb {
  width: 10px;
  height: 10px;
  background: #4fb3e8;
}

.end {
  margin-left: auto;
}

.search {
  display: flex;
  align-items: center;
  height: 11px;
  margin: 4px 5px 0 4px;
  padding: 0 3px;
  background: #dedede;
  border-radius: 2px;
}

.search input {
  flex: 1;
  background: none;
}

.search input::placeholder {
  color: #999;
}

.mag {
  transform: scaleX(-1);
}

.icon-row {
  display: flex;
  justify-content: space-between;
  align-items: center;
  height: 26px;
  padding: 0 1px 0 0;
}

.icon-row .icon {
  width: 10px;
  height: 10px;
}

.color {
  padding: 7px 5px 0 5px;
}

.mix {
  display: flex;
  gap: 5px;
}

.paints {
  position: relative;
  width: 23px;
  height: 24px;
}

.under, .over {
  position: absolute;
  width: 14px;
  height: 14px;
  border: 1px solid #ddd;
}

.under {
  right: 0;
  top: 1px;
  border: 4px solid #eee;
  background: #bbb;
}

.over {
  left: 0;
  top: 9px;
  background: #4fb3e6;
}

.channels {
  flex: 1;
  display: grid;
  grid-template-columns: 7px 1fr 22px;
  gap: 3px 2px;
  align-items: center;
}

.channels label {
  font-weight: 700;
}

input[type="range"] {
  width: 100%;
  height: 7px;
}

.channels input[type="range"]::-webkit-slider-runnable-track {
  height: 4px;
  background: var(--track);
}

.c { --track: linear-gradient(90deg, #eee, #45aee4 60%, #2a7fc0); }
.m { --track: linear-gradient(90deg, #5bb5e0, #4e62a8 50%, #6a2580); }
.y { --track: linear-gradient(90deg, #57b2e2, #4fa58c 50%, #4fa53c); }
.channels .k { --track: linear-gradient(90deg, #4da9d6, #1d4458 60%, #111); }

input[type="range"]::-webkit-slider-thumb {
  appearance: none;
  width: 6px;
  height: 6px;
  margin-top: -1px;
  border: 1px solid #12334d;
  border-radius: 50%;
  background: #5fb8e6;
}

input.plain::-webkit-slider-runnable-track {
  height: 1px;
  background: #999;
}

input.plain::-webkit-slider-thumb {
  width: 7px;
  height: 7px;
  margin-top: -3px;
  border-color: #ccc;
  background: #fff;
}

.quick {
  display: flex;
  align-items: center;
  gap: 1px;
  margin-top: 4px;
}

.chips {
  position: relative;
  display: flex;
  margin-left: 2px;
}

.chips button {
  width: 13px;
  height: 10px;
  border: 1px solid #777;
  background: #fff;
}

.chips .k {
  background: #000;
}

.chips .none, .no-color {
  background: linear-gradient(to bottom right, #fff 44%, #e05050 46% 54%, #fff 56%);
}

.hand {
  position: absolute;
  left: 4px;
  top: 6px;
  width: 8px;
  height: 10px;
  z-index: 2;
}

.tooltip {
  position: absolute;
  left: 5px;
  top: 16px;
  z-index: 1;
  padding: 1px 3px;
  background: #cfe0d3;
  border: 1px solid #b4c2b7;
  white-space: nowrap;
}

.wheel {
  position: relative;
  display: grid;
  place-items: center;
  width: 57px;
  height: 57px;
  margin: 1px auto 0;
  border-radius: 50%;
  background:
    radial-gradient(circle, #c0c0c0 0 23px, transparent 24px),
    conic-gradient(#c8e83a, #f2ea20 12%, #f08a30 20%, #e8443a 27%, #e04c90 35%, #d84cd8 45%, #b04cf0 54%, #2c50e0 62%, #6fd8f0 70%, #74ecec 86%, #6ed860 93%, #9ee040);
}

.sv {
  position: relative;
  width: 27px;
  height: 27px;
  background: linear-gradient(transparent 10%, #0b1a22), linear-gradient(90deg, #b7dff0, #4fd4f4);
}

.sv i, .hue {
  position: absolute;
  left: 15px;
  top: 10px;
  width: 4px;
  height: 4px;
  border: 1px solid #2c7287;
  border-radius: 50%;
}

.wheel .hue {
  left: 1px;
  top: 34px;
  border-radius: 0;
}

.opacity {
  display: flex;
  align-items: center;
  gap: 2px;
  height: 21px;
  padding: 0 0 0 5px;
}

.opacity label {
  font-weight: 700;
}

.opacity .plain {
  flex: 1;
}

.opacity input[type="text"] {
  width: 26px;
}

.lower button {
  padding: 0 5px 0 7px;
}

.appearance {
  flex: 1;
  display: flex;
  padding: 4px 5px 7px 9px;
  gap: 2px;
  border-bottom: 1px solid #aaa;
}

.rows {
  flex: 1;
}

.row {
  display: flex;
  align-items: center;
  gap: 3px;
  height: 14px;
}

.label {
  flex: 1;
  font-weight: 700;
}

.row .label.indent {
  padding-left: 11px;
}

.row input {
  width: 32px;
}

.sw {
  width: 10px;
  height: 10px;
  background-color: #4fb3e6;
  border: 1px solid #777;
}

.sw.checker {
  background-color: transparent;
  border-color: #ccc;
}

.bottom {
  height: 22px;
  padding: 0 1px;
}

/* colour strip */
.swatches {
  display: flex;
  flex-direction: column;
  align-items: center;
  gap: 2px;
  padding-top: 2px;
  background: #c2c2c2;
}

.no-color {
  width: 10px;
  height: 8px;
  margin-bottom: -2px;
}

.strip {
  flex: 1;
  align-self: stretch;
  margin-left: 1px;
  display: flex;
  flex-direction: column;
}

.strip i {
  flex: 1;
}

.notes {
  position: absolute;
  inset: 0;
  width: 100%;
  height: 100%;
  pointer-events: none;
  stroke: none;
}
```
